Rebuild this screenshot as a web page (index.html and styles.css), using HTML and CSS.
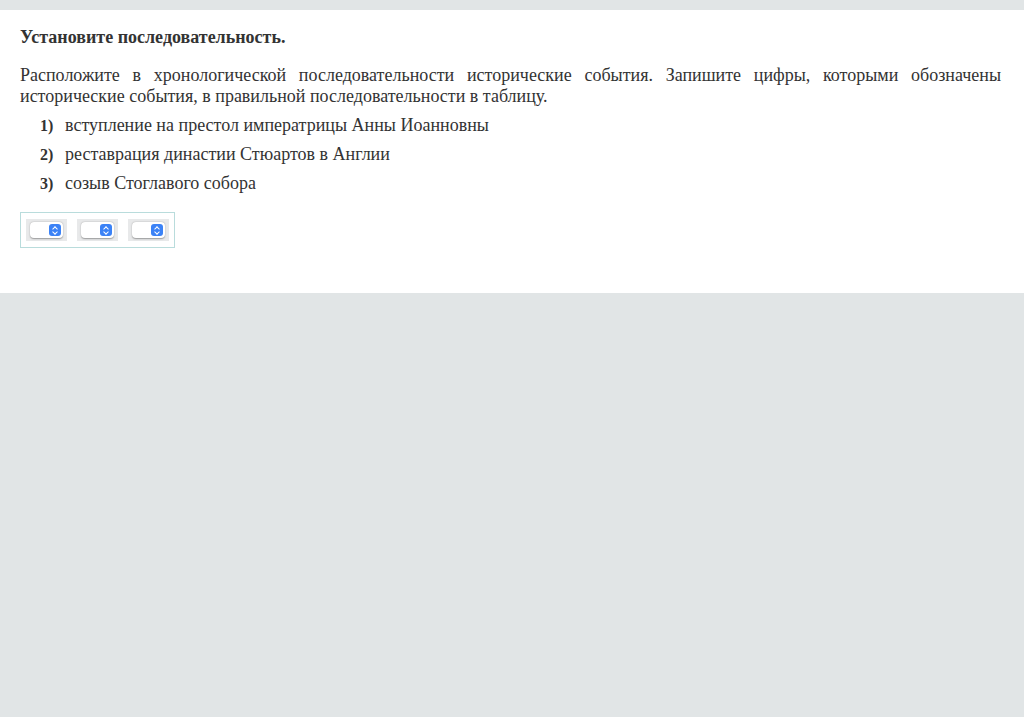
FILE: index.html
```html
<!DOCTYPE html>
<html lang="ru">
  <head>
    <meta charset="UTF-8" />
    <title>Установите последовательность</title>
    <link rel="stylesheet" href="styles.css">
  </head>
  <body>
    <div class="task">
      <div class="task-title">Установите последовательность.</div>
      <p class="task-text">
        Расположите в хронологической последовательности исторические события. Запишите цифры, которыми обозначены исторические события, в правильной последовательности в таблицу.
      </p>
      <ol class="events">
        <li><span class="num">1)</span>вступление на престол императрицы Анны Иоанновны</li>
        <li><span class="num">2)</span>реставрация династии Стюартов в Англии</li>
        <li><span class="num">3)</span>созыв Стоглавого собора</li>
      </ol>
      <div class="answer">
        <div class="cell"><div class="select"><span class="arrows"></span></div></div>
        <div class="cell"><div class="select"><span class="arrows"></span></div></div>
        <div class="cell"><div class="select"><span class="arrows"></span></div></div>
      </div>
    </div>
  </body>
</html>
```

FILE: styles.css
```css
* {
  box-sizing: border-box;
  margin: 0;
  padding: 0;
}

body {
  background: #e1e5e6;
  padding-top: 10px;
  font-family: "Liberation Serif", "Times New Roman", serif;
  color: #333;
}

.task {
  background: #fff;
  height: 283px;
  padding: 17px 23px 0 20px;
}

.task-title {
  font-weight: bold;
  font-size: 18px;
  line-height: 20px;
}

.task-text {
  margin-top: 18px;
  font-size: 18px;
  line-height: 21px;
  text-align: justify;
}

.events {
  list-style: none;
  margin-top: 8px;
  padding-left: 20px;
}

.events li {
  display: flex;
  align-items: baseline;
  font-size: 18px;
  line-height: 21px;
  margin-bottom: 8px;
}

.events .num {
  font-weight: bold;
  font-size: 16px;
  width: 25px;
  flex-shrink: 0;
}

.answer {
  display: inline-flex;
  gap: 10px;
  margin-top: 10px;
  padding: 6px 5px;
  border: 1px solid #b9dcdc;
}

.cell {
  width: 41px;
  height: 22px;
  background: #e8e9ea;
  display: flex;
  align-items: center;
  padding-left: 4px;
}

.select {
  position: relative;
  width: 33px;
  height: 16px;
  background: #fff;
  border-radius: 4px;
  box-shadow: 0 0.5px 1.5px rgba(0, 0, 0, 0.35);
}

.arrows {
  position: absolute;
  right: 2px;
  top: 2px;
  width: 12px;
  height: 12px;
  border-radius: 3px;
  background: #3b82f6;
}

.arrows::before,
.arrows::after {
  content: "";
  position: absolute;
  left: 4px;
  width: 3px;
  height: 3px;
  border-left: 1px solid #fff;
  border-top: 1px solid #fff;
}

.arrows::before {
  top: 2.5px;
  transform: rotate(45deg);
}

.arrows::after {
  top: 5.5px;
  transform: rotate(225deg);
}
```
